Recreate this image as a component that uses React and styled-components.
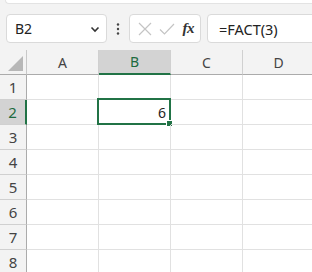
import styled, { createGlobalStyle } from "styled-components";

const GlobalStyle = createGlobalStyle`
  body {
    margin: 0;
    background: #f3f3f3;
    font-family: "Noto Sans", "Liberation Sans", sans-serif;
  }
`;

const columnas = ["A", "B", "C", "D"];
const filas = [1, 2, 3, 4, 5, 6, 7, 8];

const Pagina = styled.div`
  width: 312px;
  height: 272px;
  overflow: hidden;
  background: #f3f3f3;
`;

const BordeCinta = styled.div`
  height: 3px;
  margin-left: 5px;
  background: #ffffff;
  border: 1px solid #e3e3e3;
  border-top: none;
  border-right: none;
  border-bottom-left-radius: 6px;
`;

const BarraFormula = styled.div`
  display: flex;
  align-items: center;
  height: 29px;
  margin-top: 10px;
  padding-left: 6px;
  margin-bottom: 7px;
`;

const CajaBlanca = styled.div`
  box-sizing: border-box;
  height: 29px;
  background: #ffffff;
  border: 1px solid #dadada;
  border-radius: 4px;
  display: flex;
  align-items: center;
`;

const CuadroNombre = styled(CajaBlanca)`
  width: 101px;
  padding: 0 6px 0 8px;
  justify-content: space-between;
  font-size: 14px;
  color: #222;
`;

const Puntos = styled.div`
  width: 22px;
  display: flex;
  justify-content: center;
`;

const CuadroAcciones = styled(CajaBlanca)`
  width: 72px;
  padding: 0 6px 0 8px;
  justify-content: space-between;
`;

const Fx = styled.span`
  font-family: "Liberation Serif", "DejaVu Serif", serif;
  font-style: italic;
  font-weight: bold;
  font-size: 15px;
  color: #333;
  letter-spacing: -0.5px;
`;

const CuadroFormula = styled(CajaBlanca)`
  flex: 1;
  margin-left: 6px;
  margin-right: -6px;
  padding-left: 11px;
  font-size: 14.5px;
  color: #222;
`;

const Hoja = styled.div`
  display: grid;
  grid-template-columns: 27px repeat(4, 72px);
  grid-auto-rows: 25px;
  background: #ffffff;
`;

const Esquina = styled.div`
  box-sizing: border-box;
  background: #f3f3f3;
  border-right: 1px solid #c8c8c8;
  border-bottom: 1px solid #ababab;
  position: relative;
`;

const Triangulo = styled.div`
  position: absolute;
  right: 3px;
  bottom: 3px;
  width: 0;
  height: 0;
  border-left: 15px solid transparent;
  border-bottom: 15px solid #b7b7b7;
`;

const EncabezadoColumna = styled.div`
  box-sizing: border-box;
  display: flex;
  align-items: center;
  justify-content: center;
  font-size: 14px;
  color: ${(p) => (p.$activo ? "#1d6b40" : "#444")};
  background: ${(p) => (p.$activo ? "#d3d3d3" : "#f3f3f3")};
  border-right: 1px solid #d0d0d0;
  border-bottom: ${(p) => (p.$activo ? "2px solid #217346" : "1px solid #ababab")};
`;

const EncabezadoFila = styled.div`
  box-sizing: border-box;
  display: flex;
  align-items: center;
  justify-content: center;
  font-size: 15px;
  color: ${(p) => (p.$activo ? "#1d6b40" : "#444")};
  background: ${(p) => (p.$activo ? "#d3d3d3" : "#f3f3f3")};
  border-bottom: 1px solid #d0d0d0;
  border-right: ${(p) => (p.$activo ? "2px solid #217346" : "1px solid #ababab")};
`;

const Celda = styled.div`
  box-sizing: border-box;
  position: relative;
  display: flex;
  align-items: center;
  justify-content: flex-end;
  padding-right: 4px;
  font-size: 14px;
  color: #222;
  border-right: 1px solid #e1e1e1;
  border-bottom: 1px solid #e1e1e1;
`;

const Seleccion = styled.div`
  position: absolute;
  left: -2px;
  top: -2px;
  right: -1px;
  bottom: -1px;
  border: 2px solid #217346;
  pointer-events: none;
`;

const ControlRelleno = styled.div`
  position: absolute;
  right: -4px;
  bottom: -4px;
  width: 5px;
  height: 5px;
  background: #217346;
  border: 1px solid #ffffff;
`;

function App() {
  return (
    <Pagina>
      <GlobalStyle />
      <BordeCinta />
      <BarraFormula>
        <CuadroNombre>
          <span>B2</span>
          <svg width="10" height="10" viewBox="0 0 10 10">
            <path d="M1.5 3.5 L5 7 L8.5 3.5" fill="none" stroke="#333" strokeWidth="1.6" />
          </svg>
        </CuadroNombre>
        <Puntos>
          <svg width="4" height="12" viewBox="0 0 4 12">
            <circle cx="2" cy="1.5" r="1.2" fill="#444" />
            <circle cx="2" cy="6" r="1.2" fill="#444" />
            <circle cx="2" cy="10.5" r="1.2" fill="#444" />
          </svg>
        </Puntos>
        <CuadroAcciones>
          <svg width="14" height="14" viewBox="0 0 14 14">
            <path d="M1 1 L13 13 M13 1 L1 13" stroke="#c4c4c4" strokeWidth="1.2" />
          </svg>
          <svg width="16" height="14" viewBox="0 0 16 14">
            <path d="M1 7.5 L5.5 12 L15 2" fill="none" stroke="#c4c4c4" strokeWidth="1.2" />
          </svg>
          <Fx>fx</Fx>
        </CuadroAcciones>
        <CuadroFormula>=FACT(3)</CuadroFormula>
      </BarraFormula>
      <Hoja>
        <Esquina>
          <Triangulo />
        </Esquina>
        {columnas.map((c) => (
          <EncabezadoColumna key={c} $activo={c === "B"}>
            {c}
          </EncabezadoColumna>
        ))}
        {filas.map((f) => [
          <EncabezadoFila key={"f" + f} $activo={f === 2}>
            {f}
          </EncabezadoFila>,
          ...columnas.map((c) => (
            <Celda key={c + f}>
              {c === "B" && f === 2 && (
                <>
                  6
                  <Seleccion>
                    <ControlRelleno />
                  </Seleccion>
                </>
              )}
            </Celda>
          )),
        ])}
      </Hoja>
    </Pagina>
  );
}

export default App;
